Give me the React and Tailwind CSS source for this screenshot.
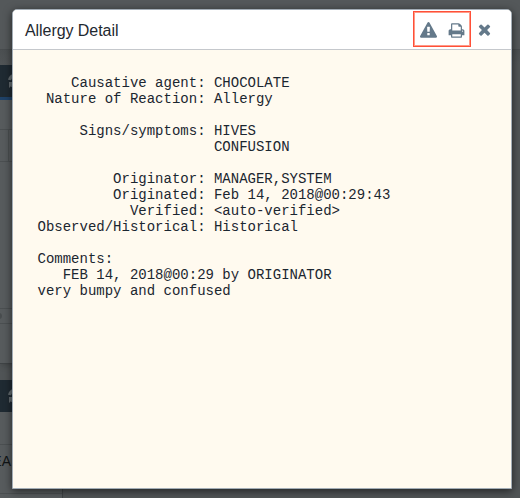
const REPORT = `    Causative agent: CHOCOLATE
 Nature of Reaction: Allergy

     Signs/symptoms: HIVES
                     CONFUSION

         Originator: MANAGER,SYSTEM
         Originated: Feb 14, 2018@00:29:43
           Verified: <auto-verified>
Observed/Historical: Historical

Comments:
   FEB 14, 2018@00:29 by ORIGINATOR
very bumpy and confused`;

const ICONS = {
  warning:
    "M1024 1375v-190q0-14-9.5-23.5t-22.5-9.5h-192q-13 0-22.5 9.5t-9.5 23.5v190q0 14 9.5 23.5t22.5 9.5h192q13 0 22.5-9.5t9.5-23.5zm-2-374l18-459q0-12-10-19-13-11-24-11h-220q-11 0-24 11-10 7-10 21l17 457q0 10 10 16.5t24 6.5h185q14 0 23.5-6.5t10.5-16.5zm-14-934l768 1408q35 63-2 126-17 29-46.5 46t-63.5 17h-1536q-34 0-63.5-17t-46.5-46q-37-63-2-126l768-1408q17-31 47-49t65-18 65 18 47 49z",
  print:
    "M448 1536h896v-256h-896v256zm0-640h896v-384h-160q-40 0-68-28t-28-68v-160h-640v640zm1152 64q0-26-19-45t-45-19-45 19-19 45 19 45 45 19 45-19 19-45zm128 0v416q0 13-9.5 22.5t-22.5 9.5h-224v160q0 40-28 68t-68 28h-960q-40 0-68-28t-28-68v-160h-224q-13 0-22.5-9.5t-9.5-22.5v-416q0-79 56.5-135.5t135.5-56.5h64v-544q0-40 28-68t68-28h672q40 0 88 20t76 48l152 152q28 28 48 76t20 88v256h64q79 0 135.5 56.5t56.5 135.5z",
  close:
    "M1490 1322q0 40-28 68l-136 136q-28 28-68 28t-68-28l-294-294-294 294q-28 28-68 28t-68-28l-136-136q-28-28-28-68t28-68l294-294-294-294q-28-28-28-68t28-68l136-136q28-28 68-28t68 28l294 294 294-294q28-28 68-28t68 28l136 136q28 28 28 68t-28 68l-294 294 294 294q28 28 28 68z",
};

function Icon({ name, className = "" }) {
  return (
    <svg viewBox="0 0 1792 1792" fill="currentColor" className={`size-[17px] shrink-0 ${className}`}>
      <path d={ICONS[name]} />
    </svg>
  );
}

function PanelBar({ className }) {
  return (
    <div className={`flex shrink-0 items-center overflow-hidden bg-[#1f2a32] pl-2 ${className}`}>
      <svg viewBox="0 0 16 16" fill="none" stroke="#656d71" strokeWidth="3" className="size-4 shrink-0">
        <path d="M1.500 7a6.500 6.500 0 0 1 11-3M14.500 9a6.500 6.500 0 0 1-11 3" />
        <path d="M15 1v6H9zM1 15V9h6z" fill="#656d71" stroke="none" />
      </svg>
    </div>
  );
}

function Backdrop() {
  return (
    <div className="flex h-full flex-col bg-[#505456]">
      <div className="h-[50px] shrink-0 border-b border-[#484c4e] bg-[#54585a]" />
      <div className="h-[15px] shrink-0 bg-gradient-to-b from-[#4b4f51] to-[#505456]" />
      <div className="flex h-[299px] w-[63px] shrink-0 flex-col border-b border-[#3f4345] bg-[#575b5d] shadow-md">
        <PanelBar className="h-8" />
        <div className="h-[3px] shrink-0 bg-[#1f4268]" />
        <div className="h-[30px] shrink-0 border-b border-[#4b4f51]" />
        <div className="h-8 shrink-0 border-b border-[#4b4f51]">
          <div className="h-full w-[9px] border-r border-[#4b4f51]" />
        </div>
        <div className="h-[147px] shrink-0 border-b border-[#4b4f51]" />
        <div className="flex h-[15px] shrink-0 items-center border-b border-[#4b4f51]">
          <div className="-ml-1 size-1.5 rounded-full bg-[#484c4e]" />
        </div>
      </div>
      <div className="h-4 shrink-0" />
      <div className="flex w-[63px] grow flex-col border-r border-[#3f4345] bg-[#575b5d]">
        <PanelBar className="h-8" />
        <div className="h-[33px] shrink-0 border-b border-[#4b4f51]" />
        <div className="flex h-[49px] shrink-0 justify-end border-b border-[#4b4f51] pt-[6px] pr-[51px] font-['Liberation_Sans',Arial,sans-serif] text-sm leading-5 text-[#101416]">
          <span className="whitespace-nowrap">EA</span>
        </div>
      </div>
    </div>
  );
}

export default function App() {
  return (
    <div className="grid h-[498px] w-[520px] overflow-hidden">
      <div className="col-start-1 row-start-1 h-[498px]">
        <Backdrop />
      </div>
      <section className="z-10 col-start-1 row-start-1 mt-[9px] ml-3 flex h-[480px] w-[500px] flex-col overflow-hidden rounded-t-[5px] border border-[#a3adb6] bg-[#fffaef] shadow-[0_2px_8px_rgba(0,0,0,0.6)]">
        <header className="flex h-10 shrink-0 items-center border-b border-[#c5c8cc] bg-white pl-3 text-[#64798a]">
          <h1 className="grow pt-0.5 font-['Liberation_Sans',Arial,sans-serif] text-base leading-5 tracking-[-0.06px] text-[#1f2930]">
            Allergy Detail
          </h1>
          <div className="-mt-px flex h-9 w-[58px] items-center gap-[11px] border border-[#ff5038] pt-0.5 pl-1.5 shadow-[inset_0_0_0_1px_#ff9a88]">
            <Icon name="warning" />
            <Icon name="print" />
          </div>
          <Icon name="close" className="mr-[18px] ml-[5px]" />
        </header>
        <pre className="pt-[25px] pl-[24.5px] font-['Liberation_Mono','Courier_New',monospace] text-sm leading-4 text-[#1b2630]">
          {REPORT}
        </pre>
      </section>
    </div>
  );
}
